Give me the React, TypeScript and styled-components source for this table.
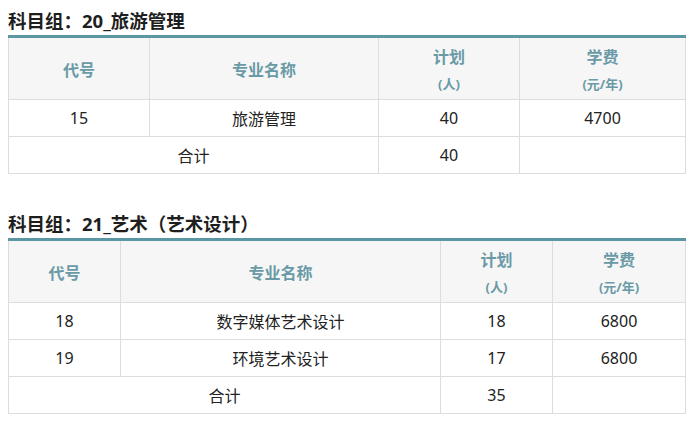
import React from "react";
import styled, { createGlobalStyle } from "styled-components";

type Row = {
  code: string;
  name: string;
  plan: number;
  fee: number;
};

type Group = {
  title: string;
  cols: number[];
  rows: Row[];
  total: number;
};

const groups: Group[] = [
  {
    title: "科目组：20_旅游管理",
    cols: [141, 229, 141, 166],
    rows: [{ code: "15", name: "旅游管理", plan: 40, fee: 4700 }],
    total: 40,
  },
  {
    title: "科目组：21_艺术（艺术设计）",
    cols: [112, 320, 112, 133],
    rows: [
      { code: "18", name: "数字媒体艺术设计", plan: 18, fee: 6800 },
      { code: "19", name: "环境艺术设计", plan: 17, fee: 6800 },
    ],
    total: 35,
  },
];

const App = () => {
  return (
    <>
      <GlobalStyle />
      <Page>
        {groups.map((g) => (
          <Section key={g.title}>
            <GroupTitle>{g.title}</GroupTitle>
            <Table>
              <colgroup>
                {g.cols.map((w, i) => (
                  <col key={i} style={{ width: w }} />
                ))}
              </colgroup>
              <thead>
                <tr>
                  <Th>代号</Th>
                  <Th>专业名称</Th>
                  <Th>
                    <HeadMain>计划</HeadMain>
                    <HeadSub>(人)</HeadSub>
                  </Th>
                  <Th>
                    <HeadMain>学费</HeadMain>
                    <HeadSub>(元/年)</HeadSub>
                  </Th>
                </tr>
              </thead>
              <tbody>
                {g.rows.map((r) => (
                  <tr key={r.code}>
                    <Td>{r.code}</Td>
                    <Td>{r.name}</Td>
                    <Td>{r.plan}</Td>
                    <Td>{r.fee}</Td>
                  </tr>
                ))}
                <tr>
                  <Td colSpan={2}>合计</Td>
                  <Td>{g.total}</Td>
                  <Td></Td>
                </tr>
              </tbody>
            </Table>
          </Section>
        ))}
      </Page>
    </>
  );
};

export default App;

const GlobalStyle = createGlobalStyle`
  body {
    margin: 8px;
    background: #fff;
    font-family: "Noto Sans", "Noto Sans CJK SC", sans-serif;
    color: #222;
  }
`;

const Page = styled.div`
  width: 677px;
`;

const Section = styled.section`
  margin-bottom: 37px;

  &:last-child {
    margin-bottom: 0;
  }
`;

const GroupTitle = styled.h3`
  margin: 0;
  font-size: 18.5px;
  font-weight: bold;
  line-height: 25px;
  height: 27px;
  color: #1e1e1e;
`;

const Table = styled.table`
  width: 677px;
  table-layout: fixed;
  border-collapse: collapse;
  border-top: 3px solid #5b97a3;
`;

const Th = styled.th`
  height: 61px;
  padding: 0;
  background: #f6f6f6;
  border: 1px solid #dddddd;
  border-top: none;
  color: #6a9aa6;
  font-size: 16px;
  font-weight: bold;
  text-align: center;
  vertical-align: middle;
`;

const HeadMain = styled.span`
  display: block;
  line-height: 24px;
`;

const HeadSub = styled.span`
  display: block;
  font-size: 13px;
  line-height: 18px;
  margin-top: 6px;
`;

const Td = styled.td`
  height: 36px;
  padding: 0;
  border: 1px solid #dddddd;
  font-size: 16px;
  text-align: center;
  vertical-align: middle;
  color: #222;
`;
